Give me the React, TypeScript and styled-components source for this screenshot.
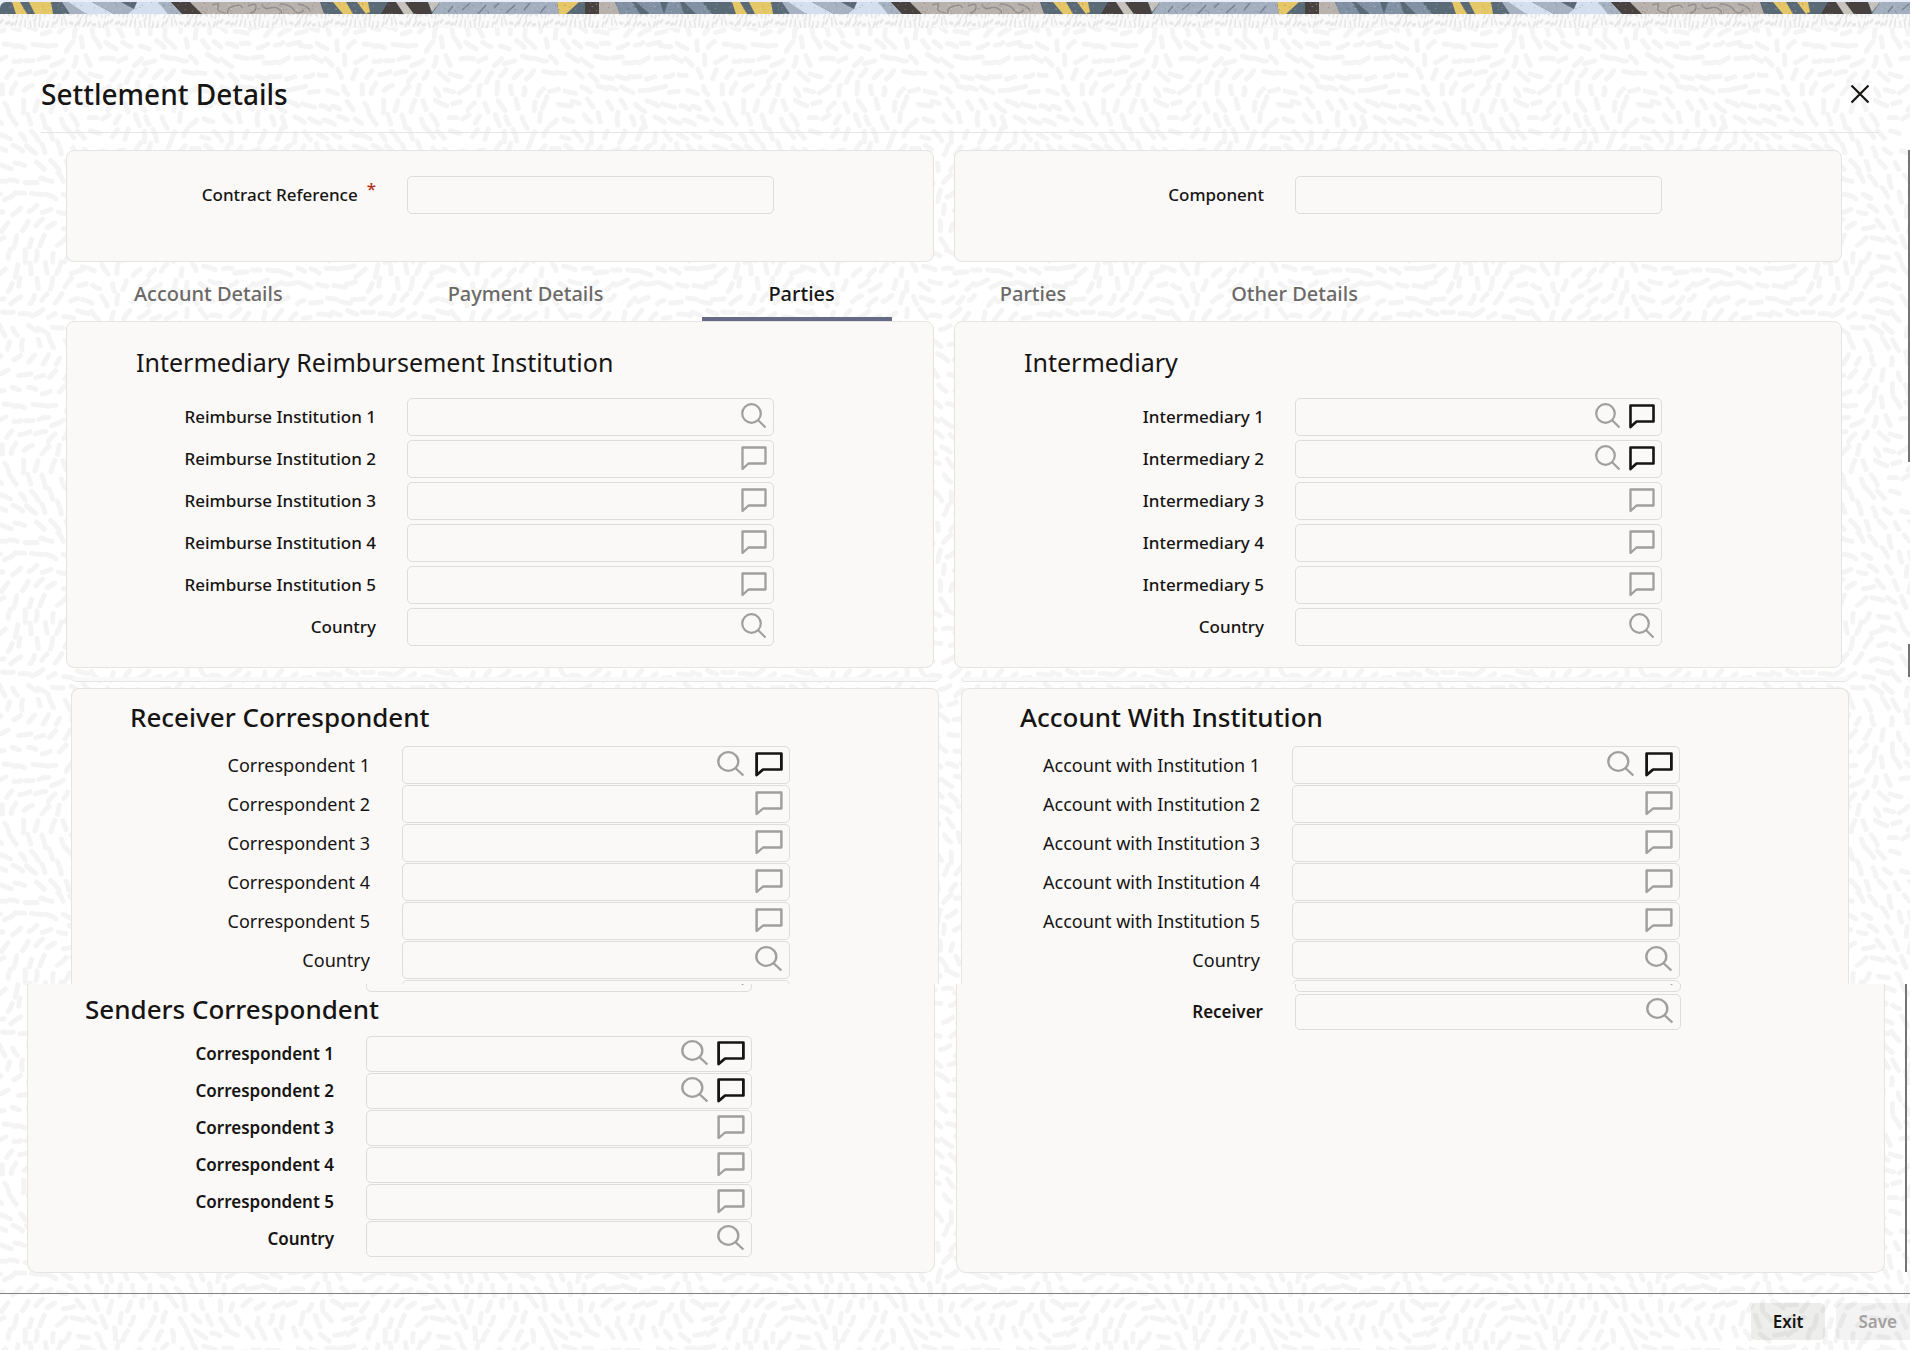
import React, { useId } from 'react';
import styled, { createGlobalStyle, css } from 'styled-components';

/* ---------- generated artwork ---------- */

function createRandom(seed: number) {
  let state = seed;
  return () => {
    state = (state * 1664525 + 1013904223) % 4294967296;
    return state / 4294967296;
  };
}

const TILE = 360;

function dashTile(color: string, width: number) {
  const random = createRandom(11);
  const tau = Math.PI * 2;
  const step = 15;
  const count = TILE / step;
  let paths = '';
  for (let row = 0; row < count; row += 1) {
    for (let col = 0; col < count; col += 1) {
      const x = col * step + (row % 2 ? step / 2 : 0) + (random() - 0.5) * 6;
      const y = row * step + (random() - 0.5) * 6;
      const u = (x / TILE) * tau;
      const v = (y / TILE) * tau;
      const angle =
        0.8 + 1.2 * Math.sin(u + v) + 1.1 * Math.cos(2 * u - v) + 0.6 * Math.sin(2 * v + 1) + (random() - 0.5) * 0.5;
      const half = 3.5 + random() * 3;
      const dx = Math.cos(angle) * half;
      const dy = Math.sin(angle) * half;
      const bend = (random() - 0.5) * 3;
      [-TILE, 0, TILE].forEach((ox) =>
        [-TILE, 0, TILE].forEach((oy) => {
          const px = x + ox;
          const py = y + oy;
          if (px < -12 || px > TILE + 12 || py < -12 || py > TILE + 12) return;
          paths += `M${(px - dx).toFixed(1)} ${(py - dy).toFixed(1)}Q${(px - (dy / half) * bend).toFixed(1)} ${(
            py +
            (dx / half) * bend
          ).toFixed(1)} ${(px + dx).toFixed(1)} ${(py + dy).toFixed(1)}`;
        }),
      );
    }
  }
  const svg = `<svg xmlns="http://www.w3.org/2000/svg" width="${TILE}" height="${TILE}" viewBox="0 0 ${TILE} ${TILE}" preserveAspectRatio="none"><path d="${paths}" fill="none" stroke="${color}" stroke-width="${width}" stroke-linecap="round"/></svg>`;
  return `url("data:image/svg+xml,${encodeURIComponent(svg)}")`;
}

const pageTexture = dashTile('#f4f4f4', 5);
const fringeTexture = dashTile('#e6e6e6', 5);

const speckles = (() => {
  const random = createRandom(5);
  return Array.from({ length: 420 }, () => ({
    x: Math.round(random() * 7200) / 10,
    y: Math.round(random() * 120) / 10,
    light: random() > 0.5,
  }));
})();

const stripes: Array<[string, string]> = [
  ['#e6c768', '12,0 20,0 27,12 16,12'],
  ['#e6c768', '29,0 51,0 53,12 35,12'],
  ['#a6b2c2', '62,0 68,0 86,12 70,12'],
  ['#d3deef', '68,0 92,0 114,12 86,12'],
  ['#a6b2c2', '92,0 121,0 143,12 114,12'],
  ['#d3deef', '137,0 160,0 168,12 128,12 134,7'],
  ['#a6b2c2', '158,0 171,0 183,12 168,12'],
  ['#47423f', '171,0 190,0 202,12 182,12'],
  ['#b9b1ab', '190,0 320,0 324,12 202,12'],
  ['#e6c768', '333,0 346,0 353,12 343,12'],
  ['#e6c768', '357,0 368,0 370,10 366,12'],
  ['#47423f', '388,0 396,0 404,12 381,12'],
  ['#c9c3be', '396,0 405,0 414,12 404,12'],
  ['#47423f', '405,0 428,0 432,12 414,12'],
  ['#c9c3be', '428,0 440,0 432,10'],
  ['#a3afbf', '440,0 557,0 559,12 432,12'],
  ['#e6c768', '557,0 579,0 566,12 559,12'],
  ['#47423f', '585,0 599,0 599,12 585,12'],
  ['#b9b1ab', '599,0 615,0 620,12 599,12'],
  ['#8292a4', '615,0 632,0 640,12 620,12'],
  ['#8292a4', '636,0 660,0 664,12 650,12'],
  ['#8292a4', '668,0 680,0 684,12 664,12'],
  ['#8292a4', '684,0 702,0 712,12 696,12'],
];

const squiggles =
  'M212 3q8-3 6 2t8 6M228 12q-2-6 6-8t8 2M248 4q8-4 8 1t-6 6M262 2q2 6 8 4t10 2-2 6M280 2q10 0 14 6t10 0M298 2q12 2 12 8';
const hatches = 'M448 10l5-6M462 8l7-6M478 12l8-9M494 6l5-5M506 11l9-8M524 8l6-7M540 11l6-7';

function Banner() {
  return (
    <BannerArt aria-hidden="true">
      <defs>
        <pattern id="ribbon" width="720" height="12" patternUnits="userSpaceOnUse">
          <rect width="720" height="12" fill="#5a6b77" />
          {stripes.map(([fill, points]) => (
            <polygon key={points} fill={fill} points={points} />
          ))}
          <path d={squiggles} fill="none" stroke="#94908e" strokeWidth="1.5" />
          <path d={hatches} fill="none" stroke="#768496" strokeWidth="1.5" />
          {speckles.map((dot, index) => (
            <circle
              key={index}
              cx={dot.x}
              cy={dot.y}
              r="0.5"
              fill={dot.light ? '#ffffff' : '#40464c'}
              opacity={dot.light ? 0.35 : 0.4}
            />
          ))}
        </pattern>
      </defs>
      <rect width="100%" height="12" fill="url(#ribbon)" />
    </BannerArt>
  );
}

/* ---------- styles ---------- */

const GlobalStyle = createGlobalStyle`
  *, *::before, *::after { box-sizing: border-box; }
  html, body { margin: 0; padding: 0; }
  body {
    background: #fff;
    color: #161513;
    font-family: "Noto Sans", "Open Sans", sans-serif;
    font-size: 17px;
    overflow-x: hidden;
  }
  button, input { font: inherit; color: inherit; }
`;

const Page = styled.div`
  position: relative;
  min-height: 100vh;
  overflow: hidden;
  background: #fff ${pageTexture};
`;

const BannerArt = styled.svg`
  display: block;
  width: 100%;
  height: 12px;
  border-top-left-radius: 6px;
`;

const TopEdge = styled.div`
  padding-top: 2px;
  background: #e9eef9;
`;

const Fringe = styled.div`
  height: 14px;
  background: #fafafa ${fringeTexture};
  background-size: 110px 220px;
`;

const Header = styled.header`
  display: flex;
  align-items: center;
  justify-content: space-between;
  height: 105px;
  margin: 0 31px 0 41px;
  padding: 28px 7px 0 0;
  border-bottom: 1px solid #e6e5e4;
`;

const Title = styled.h1`
  margin: 0;
  font-size: 28px;
  font-weight: 500;
  line-height: 40px;
`;

const CloseButton = styled.button`
  display: grid;
  place-items: center;
  width: 24px;
  height: 24px;
  padding: 0;
  border: 0;
  background: none;
`;

const Body = styled.main`
  position: relative;
`;

const Columns = styled.div<{ $left: number; $right: number; $gap: number }>`
  display: grid;
  grid-template-columns: minmax(0, 868fr) minmax(0, 888fr);
  gap: ${(p) => p.$gap}px;
  padding: 0 ${(p) => p.$right}px 0 ${(p) => p.$left}px;
`;

const TopColumns = styled(Columns)`
  padding-top: 17px;
`;

const EvenColumns = styled(Columns)`
  grid-template-columns: minmax(0, 908fr) minmax(0, 929fr);
`;

type Edge = 'full' | 'openBottom' | 'openTop';

const Panel = styled.section<{ $edge?: Edge; $top: number; $bottom: number }>`
  padding: ${(p) => p.$top}px 0 ${(p) => p.$bottom}px;
  background: #fbf9f8;
  border: 1px solid #e6e4e2;
  border-radius: 8px;
  ${(p) =>
    p.$edge === 'openBottom' &&
    css`
      border-bottom: 0;
      border-radius: 8px 8px 0 0;
    `}
  ${(p) =>
    p.$edge === 'openTop' &&
    css`
      border-top: 0;
      border-radius: 0 0 10px 10px;
    `}
`;

const PanelFoot = styled.div`
  height: 5px;
  background: #fbf9f8;
  border-bottom: 1px solid #e6e4e2;
  border-radius: 0 0 6px 6px;
`;

const Seam = styled.div`
  padding: 9px 0 6px;
`;

const PanelTitle = styled.h2<{ $inset: number; $after: number; $strong?: boolean }>`
  margin: 0 0 ${(p) => p.$after}px;
  padding-left: ${(p) => p.$inset}px;
  font-size: ${(p) => (p.$strong ? 26 : 25)}px;
  font-weight: ${(p) => (p.$strong ? 500 : 400)};
  line-height: 34px;
`;

interface Metrics {
  label: number;
  space: number;
  box: number;
  height: number;
  gap: number;
  icon: number;
  iconGap: number;
  size: number;
  weight: number;
}

const FieldList = styled.div<{ $gap: number }>`
  display: grid;
  gap: ${(p) => p.$gap}px;
`;

const FieldRow = styled.div<{ $m: Metrics }>`
  display: flex;
  align-items: center;
  gap: ${(p) => p.$m.space}px;
  font-size: ${(p) => p.$m.size}px;
  font-weight: ${(p) => p.$m.weight};
`;

const FieldLabel = styled.label<{ $width: number }>`
  flex: 0 0 ${(p) => p.$width}px;
  text-align: right;
  line-height: 24px;
  white-space: nowrap;
`;

const Star = styled.span`
  padding-left: 9px;
  color: #b3311f;
  vertical-align: 6px;
  line-height: 12px;
`;

const FieldBox = styled.div<{ $m: Metrics }>`
  display: flex;
  align-items: center;
  gap: ${(p) => p.$m.iconGap}px;
  flex: 0 1 ${(p) => p.$m.box}px;
  height: ${(p) => p.$m.height}px;
  padding: 0 6px 3px 8px;
  border: 1px solid #dfdddb;
  border-radius: 5px;
`;

const TextInput = styled.input`
  flex: 1;
  min-width: 0;
  height: 100%;
  padding: 0;
  border: 0;
  outline: 0;
  background: transparent;
`;

const IconButton = styled.button<{ $width: number; $dark?: boolean }>`
  width: ${(p) => p.$width}px;
  height: 26px;
  padding: 0;
  border: 0;
  background: none;
  color: ${(p) => (p.$dark ? '#161513' : '#a09f9e')};
  svg {
    display: block;
    width: 100%;
    height: 100%;
  }
`;

const CutBelow = styled.div`
  height: 5px;
  padding-top: 1px;
  overflow: hidden;
`;

const CutAbove = styled.div`
  display: flex;
  flex-direction: column;
  justify-content: flex-end;
  height: 8px;
  overflow: hidden;
`;

const TabBar = styled.nav`
  display: flex;
  gap: 42px;
  height: 59px;
  padding-left: 68px;
`;

const Tab = styled.button<{ $active?: boolean }>`
  padding: 8px 57px 0 66px;
  border: 0;
  border-bottom: 4px solid ${(p) => (p.$active ? '#666a85' : 'transparent')};
  background: none;
  color: ${(p) => (p.$active ? '#161513' : '#6b6967')};
  font-size: 20px;
  font-weight: 500;
  line-height: 28px;
  white-space: nowrap;
`;

const ScrollThumb = styled.span<{ $top: number; $height: number; $right: number }>`
  position: absolute;
  top: ${(p) => p.$top}px;
  right: ${(p) => p.$right}px;
  width: 2px;
  height: ${(p) => p.$height}px;
  background: #767472;
`;

const Footer = styled.footer`
  display: flex;
  justify-content: flex-end;
  gap: 11px;
  height: 57px;
  margin-top: 20px;
  padding-top: 9px;
  border-top: 1px solid #858381;
`;

const FooterButton = styled.button`
  flex: none;
  height: 37px;
  padding: 0 22px;
  border: 0;
  border-radius: 5px;
  background: rgba(22, 21, 19, 0.08);
  font-size: 17px;
  font-weight: 600;
  &:disabled {
    margin-right: -9px;
    background: rgba(22, 21, 19, 0.05);
    color: #a3a1a0;
  }
`;

/* ---------- icons ---------- */

const SearchIcon = () => (
  <svg viewBox="0 0 26 26" preserveAspectRatio="none" fill="none" stroke="currentColor" strokeWidth="2.2">
    <circle cx="10.5" cy="10.5" r="9.3" />
    <path d="M17 17l7.5 7.5" />
  </svg>
);

const NoteIcon = ({ heavy }: { heavy?: boolean }) => (
  <svg
    viewBox="0 0 26 26"
    preserveAspectRatio="none"
    fill="none"
    stroke="currentColor"
    strokeWidth={heavy ? 2.6 : 2.3}
    strokeLinejoin="round"
  >
    <path d="M1.5 2.5H24.5V18.5H7.5L1.5 24Z" />
  </svg>
);

/* ---------- form ---------- */

type Action = 'search' | 'note' | 'noteFilled';

interface FieldSpec {
  label: string;
  actions?: Action[];
  required?: boolean;
}

const upper: Metrics = {
  label: 309,
  space: 31,
  box: 367,
  height: 38,
  gap: 4,
  icon: 26,
  iconGap: 8,
  size: 17,
  weight: 500,
};
const middle: Metrics = {
  label: 298,
  space: 32,
  box: 388,
  height: 38,
  gap: 1,
  icon: 28,
  iconGap: 10,
  size: 18,
  weight: 400,
};
const lower: Metrics = {
  label: 306,
  space: 32,
  box: 386,
  height: 36,
  gap: 1,
  icon: 28,
  iconGap: 8,
  size: 17,
  weight: 600,
};

const actionName: Record<Action, string> = { search: 'Search', note: 'Note', noteFilled: 'Note' };

function Box({ id, name, actions = [], m }: { id?: string; name: string; actions?: Action[]; m: Metrics }) {
  return (
    <FieldBox $m={m}>
      <TextInput id={id} type="text" aria-label={id ? undefined : name} />
      {actions.map((action) => (
        <IconButton
          key={action}
          type="button"
          $width={m.icon}
          $dark={action === 'noteFilled'}
          aria-label={`${actionName[action]} ${name}`}
        >
          {action === 'search' ? <SearchIcon /> : <NoteIcon heavy={action === 'noteFilled'} />}
        </IconButton>
      ))}
    </FieldBox>
  );
}

function Field({ spec, m }: { spec: FieldSpec; m: Metrics }) {
  const id = useId();
  return (
    <FieldRow $m={m}>
      <FieldLabel htmlFor={id} $width={m.label}>
        {spec.label}
        {spec.required && <Star>*</Star>}
      </FieldLabel>
      <Box id={id} name={spec.label} actions={spec.actions} m={m} />
    </FieldRow>
  );
}

function BareField({ m, actions }: { m: Metrics; actions?: Action[] }) {
  return (
    <FieldRow $m={m}>
      <FieldLabel as="span" $width={m.label} />
      <Box name="Additional detail" actions={actions} m={m} />
    </FieldRow>
  );
}

function Fields({ items, m }: { items: FieldSpec[]; m: Metrics }) {
  return (
    <FieldList $gap={m.gap}>
      {items.map((spec) => (
        <Field key={spec.label} spec={spec} m={m} />
      ))}
    </FieldList>
  );
}

function partyFields(prefix: string, first: Action[][]): FieldSpec[] {
  const lines = [1, 2, 3, 4, 5].map((n) => ({
    label: `${prefix} ${n}`,
    actions: first[n - 1] ?? (['note'] as Action[]),
  }));
  return [...lines, { label: 'Country', actions: ['search'] }];
}

const both: Action[] = ['search', 'noteFilled'];
const tabs = ['Account Details', 'Payment Details', 'Parties', 'Parties', 'Other Details'];

export default function App() {
  return (
    <>
      <GlobalStyle />
      <Page>
        <TopEdge>
          <Banner />
        </TopEdge>
        <Fringe />
        <Header>
          <Title>Settlement Details</Title>
          <CloseButton type="button" aria-label="Close">
            <svg width="20" height="20" viewBox="0 0 20 20" fill="none" stroke="#161513" strokeWidth="2.2">
              <path d="M1.5 1.5l17 17M18.5 1.5l-17 17" />
            </svg>
          </CloseButton>
        </Header>
        <Body>
          <TopColumns $left={66} $right={68} $gap={20}>
            <Panel $top={25} $bottom={47}>
              <Fields items={[{ label: 'Contract Reference', required: true }]} m={upper} />
            </Panel>
            <Panel $top={25} $bottom={47}>
              <Fields items={[{ label: 'Component' }]} m={upper} />
            </Panel>
          </TopColumns>

          <TabBar>
            {tabs.map((name, index) => (
              <Tab key={index} type="button" $active={index === 2}>
                {name}
              </Tab>
            ))}
          </TabBar>

          <Columns $left={66} $right={68} $gap={20}>
            <Panel $top={23} $bottom={21}>
              <PanelTitle $inset={69} $after={19}>
                Intermediary Reimbursement Institution
              </PanelTitle>
              <Fields items={partyFields('Reimburse Institution', [['search']])} m={upper} />
            </Panel>
            <Panel $top={23} $bottom={21}>
              <PanelTitle $inset={69} $after={19}>
                Intermediary
              </PanelTitle>
              <Fields items={partyFields('Intermediary', [both, both])} m={upper} />
            </Panel>
          </Columns>

          <Seam>
            <Columns $left={71} $right={61} $gap={22}>
              <PanelFoot />
              <PanelFoot />
            </Columns>
          </Seam>

          <Columns $left={71} $right={61} $gap={22}>
            <Panel $edge="openBottom" $top={11} $bottom={0}>
              <PanelTitle $inset={58} $after={12} $strong>
                Receiver Correspondent
              </PanelTitle>
              <Fields items={partyFields('Correspondent', [both])} m={middle} />
              <CutBelow>
                <BareField m={middle} />
              </CutBelow>
            </Panel>
            <Panel $edge="openBottom" $top={11} $bottom={0}>
              <PanelTitle $inset={58} $after={12} $strong>
                Account With Institution
              </PanelTitle>
              <Fields items={partyFields('Account with Institution', [both])} m={middle} />
              <CutBelow>
                <BareField m={middle} />
              </CutBelow>
            </Panel>
          </Columns>

          <EvenColumns $left={27} $right={25} $gap={21}>
            <Panel $edge="openTop" $top={0} $bottom={15}>
              <CutAbove>
                <BareField m={lower} actions={['search']} />
              </CutAbove>
              <PanelTitle $inset={57} $after={10} $strong>
                Senders Correspondent
              </PanelTitle>
              <Fields items={partyFields('Correspondent', [both, both])} m={lower} />
            </Panel>
            <Panel $edge="openTop" $top={0} $bottom={15}>
              <FieldList $gap={2}>
                <CutAbove>
                  <BareField m={lower} actions={['search']} />
                </CutAbove>
                <Field spec={{ label: 'Receiver', actions: ['search'] }} m={lower} />
              </FieldList>
            </Panel>
          </EvenColumns>

          <ScrollThumb $top={17} $height={312} $right={0} />
          <ScrollThumb $top={511} $height={33} $right={0} />
          <ScrollThumb $top={851} $height={288} $right={3} />
        </Body>
        <Footer>
          <FooterButton type="button">Exit</FooterButton>
          <FooterButton type="button" disabled>
            Save
          </FooterButton>
        </Footer>
      </Page>
    </>
  );
}
